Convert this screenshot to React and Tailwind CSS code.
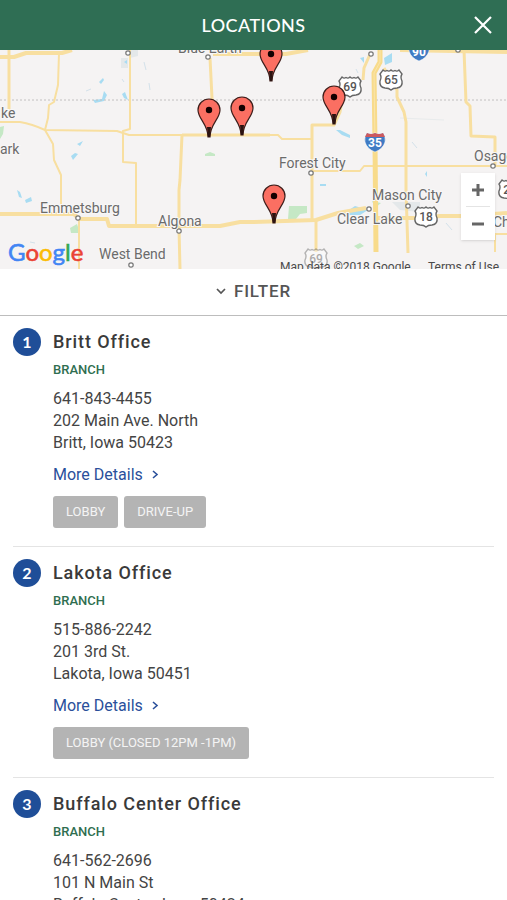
import React from "react";

const locations = [
  {
    id: 1,
    name: "Britt Office",
    type: "BRANCH",
    lines: ["641-843-4455", "202 Main Ave. North", "Britt, Iowa 50423"],
    tags: ["LOBBY", "DRIVE-UP"],
  },
  {
    id: 2,
    name: "Lakota Office",
    type: "BRANCH",
    lines: ["515-886-2242", "201 3rd St.", "Lakota, Iowa 50451"],
    tags: ["LOBBY (CLOSED 12PM -1PM)"],
  },
  {
    id: 3,
    name: "Buffalo Center Office",
    type: "BRANCH",
    lines: ["641-562-2696", "101 N Main St", "Buffalo Center, Iowa 50424"],
    tags: [],
  },
];

const thinRoads = [
  "M59 53L58 85L54 102L49 105L48 118L45 130L53 144L54 160L61 175L61 204",
  "M0 122H20Q32 124 45 130L117 131L129 135H182",
  "M130 50V129L123 131V162L136 163V226",
  "M240 135H278L282 139H312",
  "M312 171H360L364 166H507",
  "M79 219V269",
  "M493 234H507M495 234V252",
];

const mediumRoads = [
  "M9 50V110",
  "M182 135L180 180L179 190V228L180 269",
  "M182 135H270",
  "M210 58L212 98L209 135",
  "M371 52L364 68L363 80M342 100L340 112L334 125H312V220",
  "M384 68L397 90V97L404 112L406 122V190L408 253",
  "M464 50L466 102L470 106L471 136L495 137V165",
  "M316 220V252",
];

const thickRoads = [
  "M0 57H14L26 53H62L72 50",
  "M213 54H286L308 50",
  "M400 50L507 52",
  "M0 214H74L79 219H107L109 226H220L240 222H253L316 220L338 213L366 208",
  "M375 218H420L440 216H465L507 213",
];

const towns = [
  [128, 53], [208, 57], [371, 54], [458, 50], [311, 173], [78, 218],
  [179, 231], [131, 265], [369, 209], [408, 206], [493, 166],
];

const labels = [
  ["Blue Earth", 178, 53],
  ["ke", 1, 118],
  ["ark", 0, 154],
  ["Forest City", 279, 168],
  ["Osage", 474, 161],
  ["Emmetsburg", 40, 213],
  ["Algona", 158, 226],
  ["West Bend", 99, 259],
  ["Mason City", 372, 200],
  ["Clear Lake", 337, 224],
  ["Cha", 493, 227],
];

const pins = [[271, 81], [209, 137], [242, 135], [334, 124], [274, 223]];

function Pin({ x, y }) {
  return (
    <g transform={`translate(${x} ${y})`}>
      <path
        d="M-1 0C-1 -13 -11 -18 -11 -27A11 11 0 0 1 11 -27C11 -18 1 -13 1 0Z"
        fill="#fb6f62"
        stroke="#3c1d1a"
        strokeWidth="1.2"
      />
      <path d="M-2 -10H2L1 0H-1Z" fill="#2b1311" />
      <circle cy="-27" r="3.2" fill="#120000" />
    </g>
  );
}

function RouteShield({ x, y, number, faded }) {
  return (
    <g transform={`translate(${x} ${y})`} opacity={faded ? 0.45 : 1}>
      <path
        d="M-8 -10Q-6 -8 -4 -9.500Q-2 -8 0 -10Q2 -8 4 -9.500Q6 -8 8 -10L11 -6Q9 -3 11 1Q12 7 6 8Q2 8 0 10Q-2 8 -6 8Q-12 7 -11 1Q-9 -3 -11 -6Z"
        fill="#fff"
        stroke="#666"
        strokeWidth="1.400"
      />
      <text y="4" textAnchor="middle" fill="#555" className="font-['Roboto',sans-serif] text-[12px] font-medium">
        {number}
      </text>
    </g>
  );
}

function InterstateShield({ x, y, number }) {
  return (
    <g transform={`translate(${x} ${y})`}>
      <path
        d="M-8 -9Q-4 -7 0 -9Q4 -7 8 -9Q11 -4 10 0Q8 7 0 10Q-8 7 -10 0Q-11 -4 -8 -9Z"
        fill="#3f7bc4"
        stroke="#fff"
        strokeWidth="0.500"
      />
      <path d="M-8 -9Q-4 -7 0 -9Q4 -7 8 -9L10 -5H-10Z" fill="#cc5a5f" />
      <text y="5" textAnchor="middle" fill="#fff" className="font-['Roboto',sans-serif] text-[12px] font-bold">
        {number}
      </text>
    </g>
  );
}

function MapDrawing() {
  return (
    <svg
      viewBox="0 50 507 219"
      preserveAspectRatio="xMidYMid slice"
      className="block h-full w-full font-['Roboto',sans-serif]"
      role="img"
      aria-label="Map of office locations"
    >
      <rect y="50" width="507" height="219" fill="#f5f3f3" />
      <g fill="#c5e8c5">
        <path d="M0 127L4 126L3 134L0 139ZM205 154L210 152L215 154V156H205ZM70 228L77 224L80 233H71ZM289 206H307V213L300 214L296 219H288ZM354 246L360 243L364 246L358 249ZM372 201L381 203L375 208Z" />
      </g>
      <path d="M121 58H128V68H121ZM128 50H138V56L130 58ZM392 202H420V212L400 210Z" fill="#e4e8ea" />
      <g fill="#a8dcf2">
        <path d="M93 100L102 99L104 91L107 95L104 101L95 103ZM99 82L103 78L104 80L101 84ZM122 94L125 92L128 100L124 98ZM77 144L83 141L80 146ZM71 156L75 153L78 154L73 160ZM17 190L20 192L22 198L19 197ZM25 200L31 197L32 201L26 203ZM124 62L127 60V64ZM336 130L340 130L350 135V138L342 135ZM346 212L355 206L368 210L360 215H346ZM384 58L392 53V62L385 65ZM360 58L364 57V63ZM425 174L427 171V177ZM320 184L326 184V186H320Z" />
      </g>
      <g stroke="#d3e1ea" strokeWidth="1" fill="none">
        <path d="M144 62L146 70M149 83L150 90M86 91L91 89M356 69L358 73M412 142L417 148M446 223L452 230M122 79L124 82M30 242L35 243" />
      </g>
      <path d="M400 118L444 120" stroke="#e8ebec" />
      <path d="M0 100H507" stroke="#c2c0c0" strokeDasharray="2 2" />
      <g fill="none" stroke="#f8dfa0" strokeLinejoin="round">
        {thinRoads.map((d) => <path key={d} d={d} strokeWidth="2" />)}
        {mediumRoads.map((d) => <path key={d} d={d} strokeWidth="3" />)}
        {thickRoads.map((d) => <path key={d} d={d} strokeWidth="4" />)}
        <path d="M380 50V62L374 73L375 143L376 252" stroke="#f8db8b" strokeWidth="5" />
        <path d="M380 50V62L374 73L375 143" stroke="#fae5ac" strokeWidth="1" />
      </g>
      {towns.map(([x, y]) => (
        <circle key={`${x}-${y}`} cx={x} cy={y} r="2.2" fill="#fff" stroke="#777" strokeWidth="1.200" />
      ))}
      <RouteShield x={350} y={87} number="69" />
      <RouteShield x={391} y={80} number="65" />
      <RouteShield x={426} y={217} number="18" />
      <RouteShield x={316} y={259} number="69" faded />
      <RouteShield x={510} y={190} number="21" />
      <InterstateShield x={375} y={142} number="35" />
      <InterstateShield x={419} y={51} number="90" />
      <g fill="#6b6b6b" stroke="#f8f7f7" strokeWidth="2" className="text-[14px] [paint-order:stroke]">
        {labels.map(([text, x, y]) => (
          <text key={text} x={x} y={y}>{text}</text>
        ))}
      </g>
      {pins.map(([x, y]) => <Pin key={`${x}-${y}`} x={x} y={y} />)}
      <text x="8" y="261" className="font-['Lato',sans-serif] text-[24px]" strokeWidth="0.600">
        <tspan fill="#4285f4" stroke="#4285f4">G</tspan>
        <tspan fill="#ea4335" stroke="#ea4335">o</tspan>
        <tspan fill="#fbbc05" stroke="#fbbc05">o</tspan>
        <tspan fill="#4285f4" stroke="#4285f4">g</tspan>
        <tspan fill="#34a853" stroke="#34a853">l</tspan>
        <tspan fill="#ea4335" stroke="#ea4335">e</tspan>
      </text>
      <g fill="#4a4a4a" className="text-[12px]">
        <text x="280" y="271">Map data ©2018 Google</text>
        <text x="428" y="271">Terms of Use</text>
      </g>
    </svg>
  );
}

function LocationItem({ item }) {
  return (
    <li className="flex gap-3 border-b border-[#e4e4e4] pt-3 pb-[18px]">
      <span className="flex size-7 shrink-0 items-center justify-center rounded-full bg-[#1f4e98] font-['Lato',sans-serif] text-base font-bold text-white">
        {item.id}
      </span>
      <div className="min-w-0 flex-1">
        <h2 className="text-lg leading-7 font-medium tracking-wider text-[#3a3a3a]">{item.name}</h2>
        <p className="mt-1 text-[13px] leading-5 font-medium text-[#2f6e50]">{item.type}</p>
        <address className="mt-2 text-base leading-[22px] text-[#444] not-italic">
          {item.lines.map((line) => <div key={line}>{line}</div>)}
        </address>
        <a href="#details" className="mt-[10px] flex items-center gap-2 text-base leading-[22px] text-[#2a509b]">
          More Details
          <svg viewBox="0 0 8 10" className="h-[10px] w-2" fill="none" stroke="currentColor" strokeWidth="1.600" aria-hidden="true">
            <path d="M2 1L6 4.500L2 8" />
          </svg>
        </a>
        {item.tags.length > 0 && (
          <div className="mt-[10px] flex flex-wrap gap-[6px]">
            {item.tags.map((tag) => (
              <span key={tag} className="rounded-[3px] bg-[#b4b4b4] px-[13px] text-[13px] leading-8 text-[#f4f4f4]">{tag}</span>
            ))}
          </div>
        )}
      </div>
    </li>
  );
}

export default function App() {
  return (
    <div className="flex h-screen flex-col overflow-hidden bg-white font-['Roboto',sans-serif]">
      <header className="grid h-[50px] shrink-0 grid-cols-[48px_1fr_48px] items-center bg-[#2f6e54] text-white">
        <h1 className="col-start-2 text-center font-['Lato',sans-serif] text-lg font-medium tracking-wide">LOCATIONS</h1>
        <button type="button" aria-label="Close" className="flex h-full items-center justify-center">
          <svg viewBox="0 0 18 18" className="size-[18px]" fill="none" stroke="currentColor" strokeWidth="2.200" aria-hidden="true">
            <path d="M1 1L17 17M17 1L1 17" />
          </svg>
        </button>
      </header>

      <section className="relative h-[219px] shrink-0 overflow-hidden">
        <MapDrawing />
        <div className="absolute right-3 bottom-[29px] flex w-[34px] flex-col items-center bg-white shadow">
          <button type="button" aria-label="Zoom in" className="flex h-[33px] w-full items-center justify-center">
            <svg viewBox="0 0 12 12" className="size-3" stroke="#666" strokeWidth="3" aria-hidden="true">
              <path d="M0 6H12M6 0V12" />
            </svg>
          </button>
          <div className="h-px w-6 bg-[#e4e4e4]" />
          <button type="button" aria-label="Zoom out" className="flex h-[33px] w-full items-center justify-center">
            <svg viewBox="0 0 12 12" className="size-3" stroke="#666" strokeWidth="3" aria-hidden="true">
              <path d="M0 6H12" />
            </svg>
          </button>
        </div>
      </section>

      <button
        type="button"
        className="flex h-[47px] w-full shrink-0 items-center justify-center gap-2 border-b border-[#bdbdbd] text-[17px] font-medium tracking-wider text-[#555]"
      >
        <svg viewBox="0 0 10 8" className="h-2 w-[10px]" fill="none" stroke="currentColor" strokeWidth="1.700" aria-hidden="true">
          <path d="M1 1L5 5L9 1" />
        </svg>
        FILTER
      </button>

      <ul className="min-h-0 flex-1 overflow-y-auto px-[13px] [scrollbar-width:none]">
        {locations.map((item) => <LocationItem key={item.id} item={item} />)}
      </ul>
    </div>
  );
}
